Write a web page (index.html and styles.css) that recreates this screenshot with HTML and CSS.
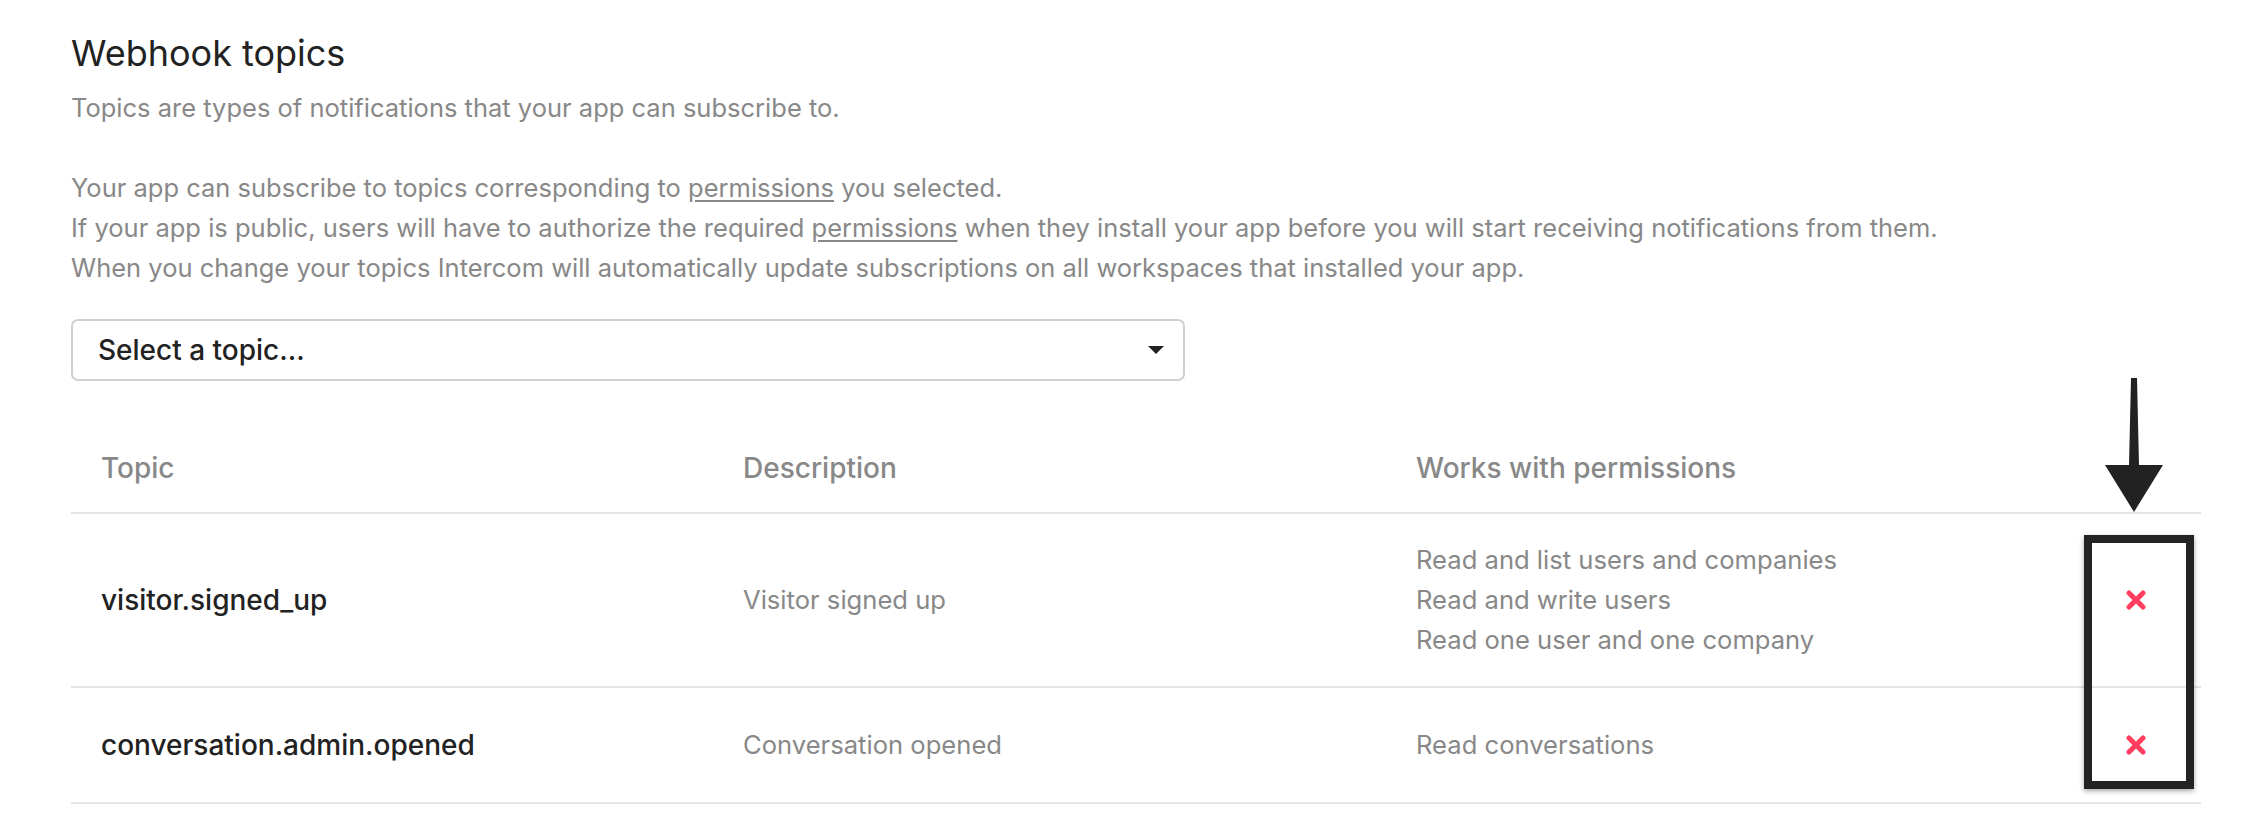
FILE: index.html
```html
<!DOCTYPE html>
<html lang="en">
<head>
<meta charset="utf-8">
<title>Webhook topics</title>
<link rel="stylesheet" href="styles.css">
</head>
<body>
<main class="page">
  <h1 class="title">Webhook topics</h1>
  <p class="lead">Topics are types of notifications that your app can subscribe to.</p>
  <p class="lead info">Your app can subscribe to topics corresponding to <a href="#" class="link">permissions</a> you selected.<br>If your app is public, users will have to authorize the required <a href="#" class="link">permissions</a> when they install your app before you will start receiving notifications from them.<br>When you change your topics Intercom will automatically update subscriptions on all workspaces that installed your app.</p>

  <div class="select">
    <span class="select-label">Select a topic...</span>
    <svg class="caret" width="16" height="8" viewBox="0 0 16 8"><path d="M0 0H16L8 8Z" fill="#222"/></svg>
  </div>

  <table class="topics">
    <colgroup>
      <col class="c-topic"><col class="c-desc"><col class="c-perm"><col class="c-act">
    </colgroup>
    <thead>
      <tr><th>Topic</th><th>Description</th><th>Works with permissions</th><th></th></tr>
    </thead>
    <tbody>
      <tr>
        <td class="topic">visitor.signed_up</td>
        <td class="muted">Visitor signed up</td>
        <td class="muted">Read and list users and companies<br>Read and write users<br>Read one user and one company</td>
        <td class="act"><button class="remove" aria-label="Remove"><svg width="20" height="20" viewBox="0 0 20 20"><path d="M3 3L17 17M17 3L3 17" stroke="#ff3d5f" stroke-width="5" stroke-linecap="round"/></svg></button></td>
      </tr>
      <tr>
        <td class="topic">conversation.admin.opened</td>
        <td class="muted">Conversation opened</td>
        <td class="muted">Read conversations</td>
        <td class="act"><button class="remove" aria-label="Remove"><svg width="20" height="20" viewBox="0 0 20 20"><path d="M3 3L17 17M17 3L3 17" stroke="#ff3d5f" stroke-width="5" stroke-linecap="round"/></svg></button></td>
      </tr>
    </tbody>
  </table>

  <svg class="arrow" width="62" height="136" viewBox="0 0 62 136"><path d="M27 0H33L35 87H59L30 134L1 87H25Z" fill="#222"/></svg>
  <div class="highlight"></div>
</main>
</body>
</html>
```

FILE: styles.css
```css
html, body {
  margin: 0;
  padding: 0;
  background: #fff;
}

body {
  font-family: Inter, "Noto Sans", "Liberation Sans", sans-serif;
  color: #222;
}

.page {
  position: relative;
  padding: 30px 67px 0 71px;
}

.title {
  margin: 0;
  font-size: 36px;
  line-height: 46px;
  font-weight: 400;
  color: #222;
}

.lead {
  margin: 12px 0 0;
  font-size: 25.5px;
  line-height: 40px;
  color: #888;
}

.lead.info {
  margin-top: 40px;
}

.link {
  color: #888;
  text-decoration: underline;
  text-underline-offset: 3px;
}

.select {
  margin-top: 31px;
  width: 1114px;
  height: 62px;
  box-sizing: border-box;
  border: 2px solid #d0d0d0;
  border-radius: 7px;
  display: flex;
  align-items: center;
  justify-content: space-between;
  padding: 0 19px 0 25px;
}

.select-label {
  font-size: 28px;
  font-weight: 500;
  color: #222;
}

.topics {
  margin-top: 43px;
  width: 2130px;
  border-collapse: collapse;
  table-layout: fixed;
}

.c-topic { width: 642px; }
.c-desc { width: 673px; }
.c-perm { width: 685px; }
.c-act { width: 130px; }

.topics th {
  text-align: left;
  font-size: 28px;
  line-height: 40px;
  font-weight: 500;
  color: #888;
  padding: 24px 30px 24px;
  border-bottom: 2px solid #e6e6e6;
}

.topics td {
  font-size: 25.6px;
  line-height: 40px;
  padding: 26px 30px;
  vertical-align: middle;
  border-bottom: 2px solid #e6e6e6;
}

.topics td.topic {
  font-size: 28px;
  font-weight: 500;
  color: #222;
}

.topics td.muted {
  color: #888;
}

.topics td.act {
  padding: 26px 0;
  text-align: center;
}

.remove {
  width: 62px;
  height: 62px;
  border: 0;
  background: none;
  padding: 0;
  display: inline-flex;
  align-items: center;
  justify-content: center;
  vertical-align: middle;
}

.arrow {
  position: absolute;
  left: 2104px;
  top: 378px;
}

.highlight {
  position: absolute;
  left: 2084px;
  top: 535px;
  width: 110px;
  height: 254px;
  box-sizing: border-box;
  border: 8px solid #232323;
  box-shadow: 0 2px 5px rgba(0, 0, 0, 0.35);
}
```
